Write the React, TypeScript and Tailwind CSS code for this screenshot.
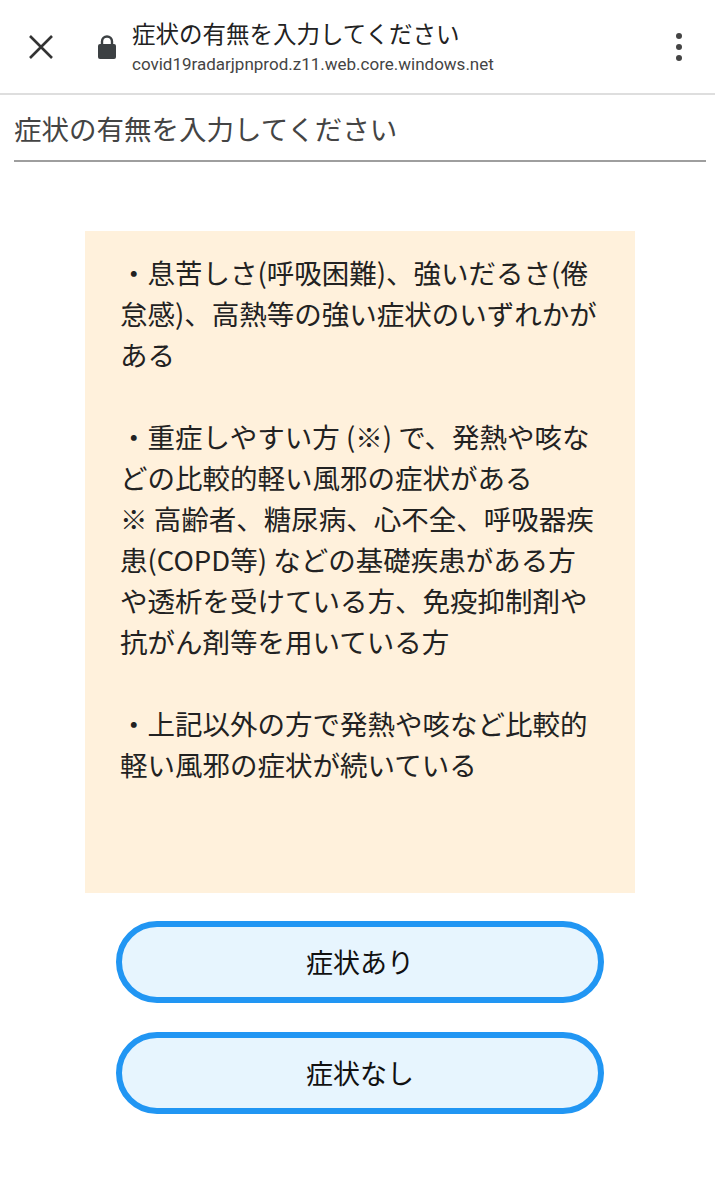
import React from "react";

const CJK = { fontFamily: '"Noto Sans CJK JP", "Noto Sans", sans-serif' };

function TopBar() {
  return (
    <header className="flex h-[95px] items-center border-b-2 border-[#dedede] bg-white">
      <svg className="ml-[28px] shrink-0" width="26" height="26" viewBox="0 0 26 26">
        <path d="M2 2 L24 24 M24 2 L2 24" stroke="#333" strokeWidth="2.6" strokeLinecap="butt" />
      </svg>
      <svg className="ml-[43px] shrink-0" width="20" height="26" viewBox="0 0 20 26">
        <path d="M5 11 V7.5 a5 5 0 0 1 10 0 V11" fill="none" stroke="#3c4043" strokeWidth="2.4" />
        <rect x="1" y="10" width="18" height="15" rx="2" fill="#3c4043" />
      </svg>
      <div className="ml-[15px] flex flex-col">
        <div className="text-[23.5px] leading-[28px] text-[#222]" style={CJK}>
          症状の有無を入力してください
        </div>
        <div className="mt-[6px] text-[17px] leading-[22px] text-[#444]" style={{ fontFamily: "Roboto, sans-serif" }}>
          covid19radarjpnprod.z11.web.core.windows.net
        </div>
      </div>
      <div className="ml-auto mr-[33px] flex flex-col gap-[5px]">
        <span className="block h-[6px] w-[6px] rounded-full bg-[#444]" />
        <span className="block h-[6px] w-[6px] rounded-full bg-[#444]" />
        <span className="block h-[6px] w-[6px] rounded-full bg-[#444]" />
      </div>
    </header>
  );
}

function ChoiceButton({ label }: { label: string }) {
  return (
    <button
      className="ml-[116px] flex h-[82px] w-[488px] items-center justify-center rounded-full border-[6px] border-[#2196f3] bg-[#e7f5fe] text-[27px] text-[#111]"
      style={CJK}
    >
      {label}
    </button>
  );
}

export default function App() {
  return (
    <div className="min-h-[1200px] bg-white" style={CJK}>
      <TopBar />
      <h1 className="ml-[14px] mr-[9px] mt-[13px] border-b-2 border-[#9e9e9e] pb-[12px] text-[27.5px] leading-[40px] text-[#444]">
        症状の有無を入力してください
      </h1>

      <section className="ml-[85px] mt-[69px] h-[662px] w-[550px] bg-[#fff1dc] pl-[35px] pt-[21px] text-[27.5px] leading-[41px] text-[#222] whitespace-nowrap">
        <p>
          ・息苦しさ(呼吸困難)、強いだるさ(倦
          <br />
          怠感)、高熱等の強い症状のいずれかが
          <br />
          ある
        </p>
        <p className="mt-[41px]">
          ・重症しやすい方 (※) で、発熱や咳な
          <br />
          どの比較的軽い風邪の症状がある
          <br />
          ※ 高齢者、糖尿病、心不全、呼吸器疾
          <br />
          患(COPD等) などの基礎疾患がある方
          <br />
          や透析を受けている方、免疫抑制剤や
          <br />
          抗がん剤等を用いている方
        </p>
        <p className="mt-[41px]">
          ・上記以外の方で発熱や咳など比較的
          <br />
          軽い風邪の症状が続いている
        </p>
      </section>

      <div className="mt-[28px] flex flex-col gap-[29px]">
        <ChoiceButton label="症状あり" />
        <ChoiceButton label="症状なし" />
      </div>
    </div>
  );
}
